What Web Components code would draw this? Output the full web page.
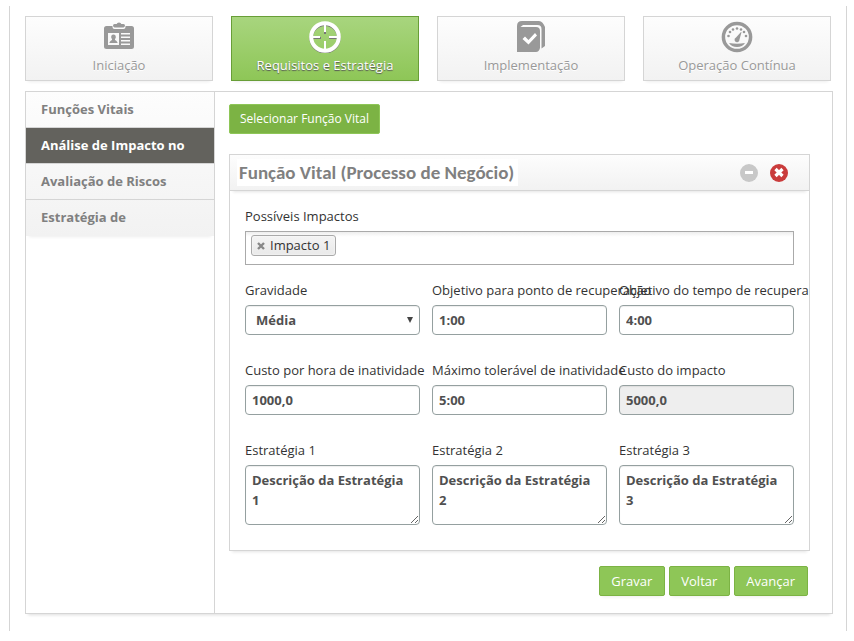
<!DOCTYPE html>
<html lang="pt">
<head>
<meta charset="utf-8">
<meta name="viewport" content="width=device-width, initial-scale=1">
<title>Requisitos e Estratégia</title>
<style>
  html { background: #fff; }
  body {
    margin: 0; padding: 6px 7px 10px 9px; box-sizing: border-box; min-height: 100vh; display: flex;
    font: 13px/20px "Open Sans", "Noto Sans", sans-serif; color: #333;
    --line: #d5d5d5; --green: #8ec657; --dark-green: #7cb344;
  }
</style>
</head>
<body>
<app-frame>
  <step-bar slot="steps">
    <step-tab label="Iniciação"><svg viewBox="0 0 32 32" width="32" height="32" fill="#999"><g transform="translate(0 1)"><path fill-rule="evenodd" d="M4 4h5.500v1q0 2 2 2h9q2 0 2-2V4H28.500Q31 4 31 6.500v18q0 2.500-2.500 2.500H3.500Q1 27 1 24.500v-18Q1 4 3.500 4zM5 11v12h11V11zM18 11v1.500h9V11zM18 14.500v1.500h9v-1.500zM18 18v1.500h9V18zM18 21.500v1.500h9v-1.500z"/><path d="M10 3.500q0-1.500 1.500-1.500h2.200q.3-1.500 2.300-1.500t2.300 1.500h2.200q1.500 0 1.500 1.500t-1.500 2h-9q-1.500-.5-1.500-2z"/><path d="M10.500 12.500c1.700 0 2.400 1.200 2.300 2.800-.1 1-.8 1.500-.9 2.400.3.900 2.300.9 2.800 3.300h-8.400c.5-2.400 2.500-2.400 2.800-3.300-.1-.9-.8-1.400-.9-2.400-.1-1.600.6-2.800 2.300-2.800z"/></g></svg></step-tab>
    <step-tab label="Requisitos e Estratégia" active><svg viewBox="0 0 32 32" width="32" height="32" fill="none"><g stroke="#777" transform="translate(0 1)"><circle cx="16" cy="16" r="13.800" stroke-width="3.600"/><path d="M16 4v8M16 20v8M4 16h8M20 16h8" stroke-width="2"/></g><g stroke="#fff"><circle cx="16" cy="16" r="13.800" stroke-width="4"/><path d="M16 4v7M16 20v8M4 16h7M20 16h8" stroke-width="2"/></g></svg></step-tab>
    <step-tab label="Implementação"><svg viewBox="0 0 32 32" width="32" height="32"><path fill="#999" d="M2 31V5Q2 0 7 0h17q2 0 3.500 1.700T30 6v19l-3.500 2.500V8q0-4-4-4H8L5.500 6H21q4 0 4 4v17q-1 4-4 4z"/><path fill="#fff" d="m7.500 18 2.500-2.500 3.500 3.500 6.500-7 2 2.500-8.500 9z"/></svg></step-tab>
    <step-tab label="Operação Contínua"><svg viewBox="0 0 32 32" width="32" height="32" fill="#999"><circle cx="16" cy="16" r="13.600" fill="none" stroke="#999" stroke-width="3.500"/><g><circle cx="7.500" cy="15" r="1.300"/><circle cx="9" cy="11" r="1.300"/><circle cx="12" cy="8.500" r="1.300"/><circle cx="16" cy="7.500" r="1.300"/><circle cx="20" cy="8.500" r="1.300"/><circle cx="23" cy="11" r="1.300"/><circle cx="25" cy="15" r="1.300"/></g><path d="m20 11 .5.300-2 7.200a2.500 2.500 0 1 1-3.500-2zM8 22q8 1.500 16 0-2.500 4-8 4t-8-4z"/></svg></step-tab>
  </step-bar>
  <side-nav slot="nav">
    <side-link>Funções Vitais</side-link>
    <side-link active>Análise de Impacto no</side-link>
    <side-link>Avaliação de Riscos</side-link>
    <side-link>Estratégia de</side-link>
  </side-nav>
  <action-button kind="dark">Selecionar Função Vital</action-button>
  <form-card heading="Função Vital (Processo de Negócio)">
    <tag-field label="Possíveis Impactos" tag="Impacto 1"></tag-field>
    <field-grid>
      <form-field kind="select" label="Gravidade" value="Média"></form-field>
      <form-field label="Objetivo para ponto de recuperação" value="1:00"></form-field>
      <form-field label="Objetivo do tempo de recupera" value="4:00"></form-field>
      <form-field label="Custo por hora de inatividade" value="1000,0"></form-field>
      <form-field label="Máximo tolerável de inatividade" value="5:00"></form-field>
      <form-field label="Custo do impacto" value="5000,0" readonly></form-field>
      <form-field kind="area" label="Estratégia 1" value="Descrição da Estratégia 1"></form-field>
      <form-field kind="area" label="Estratégia 2" value="Descrição da Estratégia 2"></form-field>
      <form-field kind="area" label="Estratégia 3" value="Descrição da Estratégia 3"></form-field>
    </field-grid>
  </form-card>
  <action-button slot="actions">Gravar</action-button>
  <action-button slot="actions">Voltar</action-button>
  <action-button slot="actions">Avançar</action-button>
</app-frame>
<script>
function define(name, render) {
  customElements.define(name, class extends HTMLElement {
    connectedCallback() {
      if (this.shadowRoot) return;
      this.attachShadow({ mode: 'open' }).innerHTML = render(this);
    }
  });
}
const attr = (el, name) => el.getAttribute(name) || '';

define('app-frame', () => `
  <style>
    :host { display: flex; flex: 1; min-width: 0; flex-direction: column; gap: 10px; padding: 10px 13px 17px 15px;
      border: solid var(--line); border-width: 0 1px; }
    .panel { flex: 1; display: grid; grid-template-columns: 189px minmax(0, 1fr); border: 1px solid var(--line);
      box-shadow: 0 4px 3px -3px #ddd; }
    aside { border-right: 1px solid var(--line); box-sizing: border-box; }
    main { padding: 12px 22px 17px 14px; display: flex; flex-direction: column; gap: 20px; align-items: flex-start; }
    footer { display: flex; gap: 4px; align-self: flex-end; padding-right: 2px; margin-top: -5px; }
  </style>
  <slot name="steps"></slot>
  <div class="panel">
    <aside><slot name="nav"></slot></aside>
    <main><slot></slot><footer><slot name="actions"></slot></footer></main>
  </div>`);

define('step-bar', () => `
  <style>
    :host { display: block; }
    nav { display: grid; grid-template-columns: repeat(4, minmax(0, 1fr)); gap: 18px; padding-right: 2px; }
  </style>
  <nav><slot></slot></nav>`);

define('step-tab', el => `
  <style>
    :host { display: block; }
    a { display: flex; flex-direction: column; align-items: center; box-sizing: border-box; height: 65px; padding-top: 4px;
      border: 1px solid var(--line); background: linear-gradient(#fdfdfd, #f2f2f2); color: #999;
      text-decoration: none; text-shadow: 0 1px 0 #fff; white-space: nowrap; box-shadow: 0 4px 3px -3px #eee; }
    span { margin-top: 2px; }
    :host([active]) a { border-color: #689e37; background: linear-gradient(#a8d57e, var(--green)); color: #fff;
      text-shadow: 0 1px 1px #555; }
  </style>
  <a href="#"><slot></slot><span>${attr(el, 'label')}</span></a>`);

define('side-nav', () => `
  <style>
    :host { display: block; }
    nav { background: linear-gradient(#fdfdfd, #f2f2f2); box-shadow: 0 4px 3px -3px #eee; }
  </style>
  <nav><slot></slot></nav>`);

define('side-link', () => `
  <style>
    :host { display: block; border-bottom: 1px solid var(--line); }
    :host(:last-of-type) { border-bottom-color: transparent; }
    a { display: block; padding: 7px 15px 8px; color: #808080; font-weight: 700; text-decoration: none; white-space: nowrap; }
    :host([active]) a { background: #63625d; color: #fff; }
  </style>
  <a href="#"><slot></slot></a>`);

define('action-button', () => `
  <style>
    :host { display: block; }
    button { display: block; height: 30px; padding: 0 12px 0 11px; border: 1px solid var(--dark-green); border-radius: 2px;
      background: var(--green); color: #fff; font: inherit; white-space: nowrap; box-shadow: 0 4px 3px -3px #eee; }
    :host([kind=dark]) button { background: var(--dark-green); border-color: var(--green); padding: 0 10px; font-size: 12px;
      box-shadow: none; }
  </style>
  <button type="button"><slot></slot></button>`);

define('form-card', el => `
  <style>
    :host { display: block; align-self: stretch; border: 1px solid var(--line); box-shadow: 0 4px 3px -3px #e4e4e4; }
    header { display: flex; align-items: center; gap: 12px; height: 35px; padding: 0 21px 0 7px;
      border-bottom: 1px solid var(--line); background: linear-gradient(#fdfdfd, #f2f2f2); box-shadow: 0 4px 3px -3px #e4e4e4; }
    h2 { margin: 0 auto 0 0; padding: 0 4px 0 2px; font: 700 19px/27px Carlito, Lato, sans-serif; color: #808080;
      background: #fff; white-space: nowrap; }
    button { display: block; border: 0; padding: 0; background: none; }
    svg { display: block; }
    .body { padding: 15px 15px 25px; display: grid; gap: 15px; }
  </style>
  <header>
    <h2>${attr(el, 'heading')}</h2>
    <button type="button" aria-label="Minimizar"><svg width="18" height="18"><circle cx="9" cy="9" r="9" fill="#c8c8c8"/><path d="M5 8.500h8" stroke="#fff" stroke-width="3"/></svg></button>
    <button type="button" aria-label="Fechar"><svg width="18" height="18"><circle cx="9" cy="9" r="9" fill="#ca3c3c"/><path d="m5.500 5 7 7M12.500 5l-7 7" stroke="#fff" stroke-width="3.200"/></svg></button>
  </header>
  <div class="body"><slot></slot></div>`);

define('tag-field', el => `
  <style>
    :host { display: block; min-width: 0; }
    label { display: block; margin-bottom: 5px; }
    .box { display: flex; gap: 5px; box-sizing: border-box; height: 34px; padding: 3px 5px; border: 1px solid #aaa;
      background: linear-gradient(#eee, #fff 15%); }
    .tag { display: flex; align-items: center; height: 17px; padding: 0 5px 2px; border: 1px solid #aaa; border-radius: 3px;
      background: linear-gradient(#f4f4f4, #e9e9e9); box-shadow: inset 0 0 2px #fff; gap: 5px; white-space: nowrap; }
    button { border: 0; padding: 2px 0 0; background: none; }
    svg { display: block; }
    input { flex: 1; min-width: 0; border: 0; padding: 0; outline: 0; background: none; font: inherit; }
  </style>
  <label for="entry">${attr(el, 'label')}</label>
  <div class="box">
    <span class="tag"><button type="button" aria-label="Remover"><svg width="8" height="8"><path d="m1 1 6 6M7 1 1 7" stroke="#888" stroke-width="2.400"/></svg></button>${attr(el, 'tag')}</span>
    <input id="entry">
  </div>`);

define('field-grid', () => `
  <style>
    :host { display: grid; grid-template-columns: repeat(3, minmax(0, 1fr)); gap: 25px 12px; }
  </style>
  <slot></slot>`);

define('form-field', el => `
  <style>
    :host { display: block; min-width: 0; }
    label { display: block; margin-bottom: 5px; white-space: nowrap; }
    input, select, textarea { display: block; box-sizing: border-box; width: 100%; height: 30px; margin: 0; padding: 4px 6px;
      border: 1px solid #95a0a0; border-radius: 4px; background: #fff; color: #505050; font: inherit; font-weight: 700;
      box-shadow: inset 0 1px 1px #eee; }
    input[readonly] { background: #eee; box-shadow: inset 0 1px 1px #ddd; }
    textarea { height: 60px; overflow: hidden; }
    select { appearance: none; padding: 4px 10px; grid-area: 1 / 1; }
    .pick { display: grid; align-items: center; }
    .pick svg { grid-area: 1 / 1; justify-self: end; margin-right: 6px; pointer-events: none; }
  </style>
  <label for="control">${attr(el, 'label')}</label>
  ${attr(el, 'kind') === 'select'
    ? `<div class="pick"><select id="control"><option>${attr(el, 'value')}</option></select><svg width="8" height="6"><path d="M1 0h6L4 6z" fill="#444"/></svg></div>`
    : attr(el, 'kind') === 'area'
      ? `<textarea id="control">${attr(el, 'value')}</textarea>`
      : `<input id="control" value="${attr(el, 'value')}"${el.hasAttribute('readonly') ? ' readonly' : ''}>`}`);
</script>
</body>
</html>
